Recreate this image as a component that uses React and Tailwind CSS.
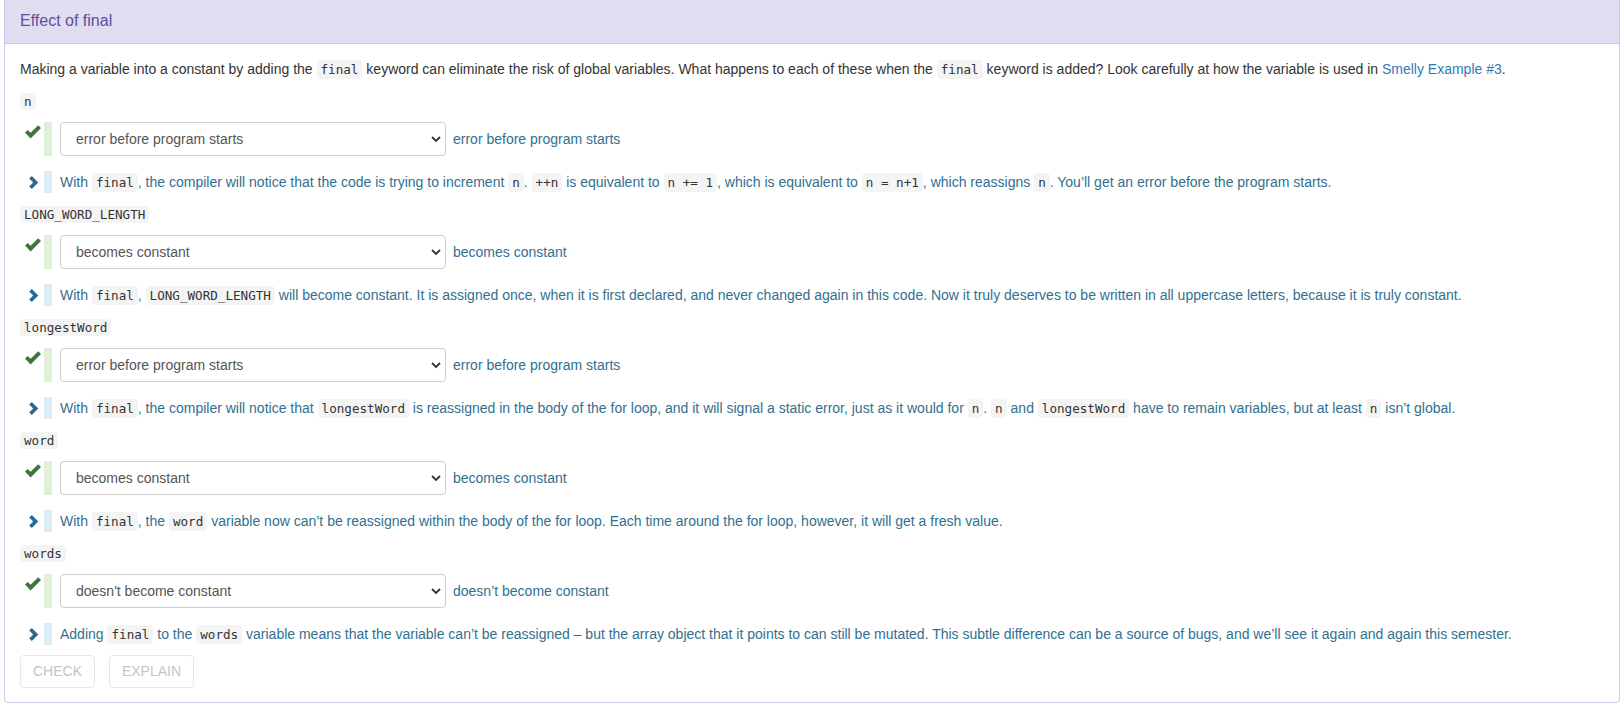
import React from "react";

const C = ({ children }) => (
  <code className="rounded-[4px] bg-[#f4f4f4] px-[4px] py-[2px] font-['DejaVu_Sans_Mono',monospace] text-[12.6px] text-[#333]">
    {children}
  </code>
);

const OPTIONS = ["", "becomes constant", "doesn't become constant", "error before program starts"];

const groups = [
  {
    name: "n",
    value: "error before program starts",
    shown: "error before program starts",
    expl: (
      <>
        With <C>final</C>, the compiler will notice that the code is trying to increment <C>n</C>. <C>++n</C> is equivalent to{" "}
        <C>n += 1</C>, which is equivalent to <C>n = n+1</C>, which reassigns <C>n</C>. You’ll get an error before the program starts.
      </>
    ),
  },
  {
    name: "LONG_WORD_LENGTH",
    value: "becomes constant",
    shown: "becomes constant",
    expl: (
      <>
        With <C>final</C>, <C>LONG_WORD_LENGTH</C> will become constant. It is assigned once, when it is first declared, and never
        changed again in this code. Now it truly deserves to be written in all uppercase letters, because it is truly constant.
      </>
    ),
  },
  {
    name: "longestWord",
    value: "error before program starts",
    shown: "error before program starts",
    expl: (
      <>
        With <C>final</C>, the compiler will notice that <C>longestWord</C> is reassigned in the body of the for loop, and it will
        signal a static error, just as it would for <C>n</C>. <C>n</C> and <C>longestWord</C> have to remain variables, but at least{" "}
        <C>n</C> isn’t global.
      </>
    ),
  },
  {
    name: "word",
    value: "becomes constant",
    shown: "becomes constant",
    expl: (
      <>
        With <C>final</C>, the <C>word</C> variable now can’t be reassigned within the body of the for loop. Each time around the for
        loop, however, it will get a fresh value.
      </>
    ),
  },
  {
    name: "words",
    value: "doesn't become constant",
    shown: "doesn’t become constant",
    expl: (
      <>
        Adding <C>final</C> to the <C>words</C> variable means that the variable can’t be reassigned – but the array object that it
        points to can still be mutated. This subtle difference can be a source of bugs, and we’ll see it again and again this semester.
      </>
    ),
  },
];

function CheckIcon() {
  return (
    <svg viewBox="0 0 16 14" className="h-[14px] w-[16px]" fill="#3c763d">
      <path d="M0 7.6 L2.8 4.9 L5.6 7.7 L13.2 0.2 L16 3 L5.6 13.4 Z" />
    </svg>
  );
}

function ChevronIcon() {
  return (
    <svg viewBox="0 0 12 13" className="h-[13px] w-[12px]" fill="#2b6a91">
      <path d="M1.2 2.6 L3.8 0 L10.3 6.5 L3.8 13 L1.2 10.4 L5.1 6.5 Z" />
    </svg>
  );
}

function Group({ g }) {
  return (
    <div className="flex flex-col items-start">
      <code className="inline-block rounded-[4px] bg-[#f4f4f4] px-[4px] py-[2px] font-['DejaVu_Sans_Mono',monospace] text-[12.6px] leading-[13px] text-[#333]">
        {g.name}
      </code>
      <div className="mt-[12px] flex h-[34px] items-center">
        <div className="flex h-full w-[24px] items-start justify-end pt-[3px] pr-[3px]">
          <CheckIcon />
        </div>
        <div className="h-full w-[8px] bg-[#dff0d8]" />
        <div className="relative ml-[8px] h-full w-[386px]">
          <select
            defaultValue={g.value}
            className="h-full w-full appearance-none rounded-[4px] border border-[#ccc] bg-white pl-[15px] text-[14px] text-[#555] outline-none"
          >
            {OPTIONS.map((o) => (
              <option key={o} value={o}>
                {o}
              </option>
            ))}
          </select>
          <svg viewBox="0 0 10 7" className="pointer-events-none absolute right-[5px] top-[14px] h-[7px] w-[10px]" fill="none" stroke="#333" strokeWidth="1.8">
            <path d="M1 1 L5 5 L9 1" />
          </svg>
        </div>
        <span className="ml-[7px] text-[14px] text-[#31708f]">{g.shown}</span>
      </div>
      <div className="mt-[15px] flex h-[22px] items-center">
        <div className="flex w-[24px] justify-end pr-[4px]">
          <ChevronIcon />
        </div>
        <div className="h-full w-[8px] bg-[#d9edf7]" />
        <p className="ml-[8px] text-[14px] leading-[20px] text-[#31708f]">{g.expl}</p>
      </div>
    </div>
  );
}

export default function App() {
  return (
    <div className="min-h-screen bg-white font-['Liberation_Sans',Arial,sans-serif] text-[14px] text-[#333]">
      <div className="mx-[4px] mt-[-1px] rounded-b-[4px] border border-[#cfc6ef]">
        <div className="flex h-[44px] items-center border-b border-[#cfc6ef] bg-[#e1ddf1] px-[15px] pb-[2px] text-[16px] text-[#5b4fa0]">
          Effect of final
        </div>
        <div className="px-[15px] pt-[15px] pb-[14px]">
          <p className="leading-[20px]">
            Making a variable into a constant by adding the <C>final</C> keyword can eliminate the risk of global variables. What
            happens to each of these when the <C>final</C> keyword is added? Look carefully at how the variable is used in{" "}
            <a href="#" className="text-[#337ab7]">
              Smelly Example #3
            </a>
            .
          </p>
          <div className="mt-[13px] flex flex-col gap-[13px]">
            {groups.map((g) => (
              <Group key={g.name} g={g} />
            ))}
          </div>
          <div className="mt-[10px] flex gap-[14px]">
            <button disabled className="h-[33px] w-[75px] rounded-[4px] border border-[#e6e6e6] bg-white text-[14px] text-[#c4c4c4]">
              CHECK
            </button>
            <button disabled className="h-[33px] w-[85px] rounded-[4px] border border-[#e6e6e6] bg-white text-[14px] text-[#c4c4c4]">
              EXPLAIN
            </button>
          </div>
        </div>
      </div>
    </div>
  );
}
